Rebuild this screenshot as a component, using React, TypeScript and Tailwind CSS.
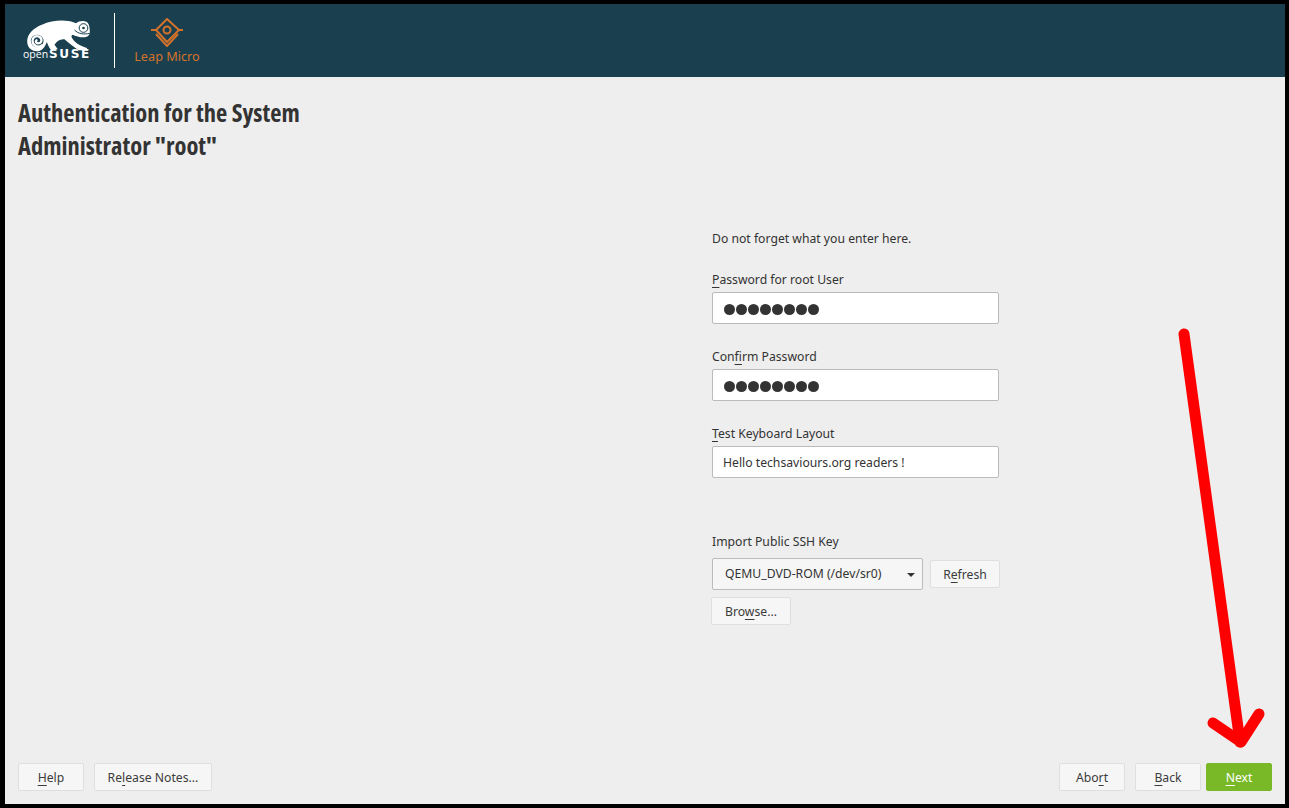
import React from 'react';

const bodyFont = "font-['Noto_Sans',sans-serif]";

const Key: React.FC<{ children: React.ReactNode }> = ({ children }) => (
  <span className="underline decoration-1 underline-offset-[3px]">{children}</span>
);

const Button: React.FC<{ className?: string; primary?: boolean; children: React.ReactNode }> = ({
  className = '',
  primary,
  children,
}) => (
  <button
    className={`h-[28px] rounded-[2px] border pt-[2px] text-[12.2px] leading-none ${
      primary ? 'border-[#79b928] bg-[#79b928] text-white' : 'border-[#dfdfdf] bg-[#f6f6f6] text-[#3b3b3b]'
    } ${className}`}
  >
    {children}
  </button>
);

const Field: React.FC<{ label: React.ReactNode; className?: string; children: React.ReactNode }> = ({
  label,
  className = '',
  children,
}) => (
  <div className={className}>
    <div className="mb-[4px] h-[18px] text-[12.2px] leading-[20px] text-[#333]">{label}</div>
    <div className="flex h-[32px] w-[287px] items-center rounded-[2px] border border-[#bbbbbb] bg-white px-[10px] pt-[2px] text-[12.2px] text-[#333]">
      {children}
    </div>
  </div>
);

const Dots = () => (
  <div className="ml-[1px] flex gap-[1px]">
    {[0, 1, 2, 3, 4, 5, 6, 7].map((i) => (
      <span key={i} className="h-[11px] w-[11px] rounded-full bg-[#333]" />
    ))}
  </div>
);

const SuseLogo = () => (
  <div className="h-[47px] w-[70px]">
    <svg viewBox="30 35 200 105" className="ml-[2px] block h-[35px] w-[67px]">
      <path
        fill="#fff"
        d="M36 108C36 85 55 68 80 58C105 47 135 43 160 47C172 49 178 52 183 54C190 47 205 45 215 50C222 55 224 68 224 80C224 90 218 95 205 96C192 96 182 92 172 88C168 90 168 95 172 100C180 112 192 120 215 128L217 135L190 135C175 125 160 112 148 102C135 100 125 108 118 118L128 132L108 135C100 125 97 115 95 110C90 125 80 138 65 138C48 138 36 125 36 108Z"
      />
      <circle cx="66" cy="107" r="19" fill="#1a4050" />
      <path
        fill="none"
        stroke="#fff"
        strokeWidth="7"
        strokeLinecap="round"
        d="M80 120C70 129 52 122 52 106C52 95 63 90 72 94C82 99 81 113 70 114C63 115 60 109 64 105"
      />
      <circle cx="205" cy="68" r="13" fill="#fff" stroke="#1a4050" strokeWidth="3" />
      <circle cx="205" cy="68" r="4" fill="#1a4050" />
      <path fill="none" stroke="#1a4050" strokeWidth="3" d="M178 74C190 86 205 88 224 84" />
    </svg>
    <div className="-mt-[3px] flex items-baseline whitespace-nowrap leading-[10px] text-white">
      <span className="font-['Open_Sans',sans-serif] text-[10.5px] font-normal">open</span>
      <span className="ml-[1px] font-['DejaVu_Sans',sans-serif] text-[12px] font-bold tracking-[1.6px]">SUSE</span>
    </div>
  </div>
);

const LeapLogo = () => (
  <svg viewBox="0 0 34 29" className="block h-[29px] w-[34px]">
    <g fill="none" stroke="#d5722a" strokeWidth="2">
      <path d="M17 1 29 12 17 24 6 12Z" />
      <path d="M6 16 17 28 28 16" />
      <path d="M1 12H6M29 12H33" />
      <circle cx="17" cy="12" r="3.5" />
    </g>
  </svg>
);

const Arrow = () => (
  <svg className="pointer-events-none absolute inset-0 h-full w-full" viewBox="0 0 1289 808">
    <g fill="none" stroke="#ff0000" strokeLinecap="round" strokeLinejoin="round">
      <path strokeWidth="11" d="M1184 334 1240 742" />
      <path strokeWidth="11" d="M1213 723 1241 742 1259 714" />
    </g>
  </svg>
);

export default function App() {
  return (
    <div className={`relative flex h-[808px] w-[1289px] flex-col overflow-hidden bg-black pt-[4px] pr-[4px] pb-[4px] pl-[5px] ${bodyFont}`}>
      <header className="flex h-[73px] shrink-0 items-center bg-[#1a4050] pl-[18px]">
        <SuseLogo />
        <div className="ml-[21px] h-[55px] w-px bg-white" />
        <div className="ml-[18px] flex w-[68px] flex-col items-center">
          <LeapLogo />
          <span className="mt-[1px] whitespace-nowrap text-[12.7px] leading-[16px] text-[#d5722a]">Leap Micro</span>
        </div>
      </header>

      <main className="flex min-h-0 flex-1 flex-col bg-[#eeeeee] px-[13px]">
        <h1 className="mt-[19px] w-[320px] font-['Open_Sans',sans-serif] text-[24.5px] leading-[33px] font-bold text-[#333] [font-stretch:75%]">
          Authentication for the System Administrator "root"
        </h1>

        <div className="ml-[694px] mt-[67px] w-[290px] flex-1">
          <p className="h-[18px] text-[12.2px] leading-[20px] text-[#333]">Do not forget what you enter here.</p>
          <Field className="mt-[23px]" label={<><Key>P</Key>assword for root User</>}>
            <Dots />
          </Field>
          <Field className="mt-[23px]" label={<>Con<Key>f</Key>irm Password</>}>
            <Dots />
          </Field>
          <Field className="mt-[23px]" label={<><Key>T</Key>est Keyboard Layout</>}>
            Hello techsaviours.org readers !
          </Field>

          <div className="mt-[54px] h-[18px] text-[12.2px] leading-[20px] text-[#333]">Import Public SSH Key</div>
          <div className="mt-[8px] flex items-center">
            <div className="flex h-[32px] w-[211px] items-center justify-between rounded-[2px] border border-[#bbbbbb] bg-[#f6f6f6] pt-[1px] pr-[7px] pl-[12px] text-[12.2px] text-[#333]">
              QEMU_DVD-ROM (/dev/sr0)
              <span className="h-0 w-0 border-x-[4px] border-t-[4px] border-x-transparent border-t-[#333]" />
            </div>
            <Button className="ml-[7px] w-[70px]">
              R<Key>e</Key>fresh
            </Button>
          </div>
          <Button className="-ml-px mt-[7px] block w-[80px]">
            Bro<Key>w</Key>se...
          </Button>
        </div>

        <footer className="mb-[13px] flex items-center">
          <Button className="w-[66px]">
            <Key>H</Key>elp
          </Button>
          <Button className="ml-[10px] w-[118px]">
            Re<Key>l</Key>ease Notes...
          </Button>
          <div className="flex-1" />
          <Button className="w-[66px]">
            Abo<Key>r</Key>t
          </Button>
          <Button className="ml-[10px] w-[66px]">
            <Key>B</Key>ack
          </Button>
          <Button primary className="ml-[5px] w-[66px]">
            <Key>N</Key>ext
          </Button>
        </footer>
      </main>

      <Arrow />
    </div>
  );
}
